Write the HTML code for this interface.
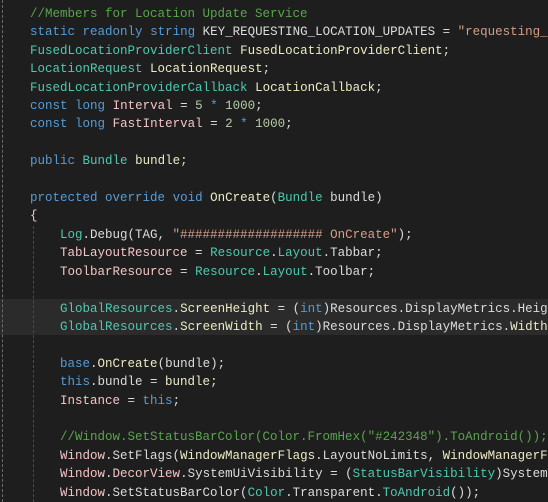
<!DOCTYPE html>
<html><head><meta charset="utf-8"><style>
html,body{margin:0;padding:0;background:#1e1e1e;width:548px;height:502px;overflow:hidden}
.c{position:absolute;left:30px;top:5px;width:518px;overflow:hidden;font-family:"Liberation Mono","Noto Sans CJK KR",monospace;font-size:12.5px;line-height:18.4px;color:#dcdcdc;white-space:pre}
.hl{position:absolute;left:0;top:299px;width:548px;height:36px;background:#2b2b2b}
.g1{position:absolute;left:2px;top:0;height:502px;border-left:1px dashed #6a6a6a}
.g2{position:absolute;left:33px;top:226px;height:276px;border-left:1px dashed #4a4a4a}
.k{color:#569cd6}.t{color:#4ec9b0}.m{color:#57a64a}.s{color:#d69d85}.n{color:#b5cea8}.y{color:#ecebc4}.p{color:#f4c4c4}
</style></head><body>
<div class="hl"></div><div class="g1"></div><div class="g2"></div>
<div class="c"><span class="m">//Members for Location Update Service</span>
<span class="k">static</span> <span class="k">readonly</span> <span class="k">string</span> KEY_REQUESTING_LOCATION_UPDATES = <span class="s">"requesting_location_updates"</span>;
<span class="t">FusedLocationProviderClient</span> <span class="y">FusedLocationProviderClient</span>;
<span class="t">LocationRequest</span> <span class="y">LocationRequest</span>;
<span class="t">FusedLocationProviderCallback</span> <span class="y">LocationCallback</span>;
<span class="k">const</span> <span class="k">long</span> <span class="p">Interval</span> = <span class="n">5</span> <span class="k">*</span> <span class="n">1000</span>;
<span class="k">const</span> <span class="k">long</span> <span class="p">FastInterval</span> = <span class="n">2</span> <span class="k">*</span> <span class="n">1000</span>;

<span class="k">public</span> <span class="t">Bundle</span> <span class="y">bundle</span>;

<span class="k">protected</span> <span class="k">override</span> <span class="k">void</span> <span class="y">OnCreate</span>(<span class="t">Bundle</span> bundle)
<span class="p">{</span>
    <span class="t">Log</span>.Debug(TAG, <span class="s">"################### OnCreate"</span>);
    <span class="p">TabLayoutResource</span> = <span class="t">Resource</span>.<span class="t">Layout</span>.Tabbar;
    <span class="p">ToolbarResource</span> = <span class="t">Resource</span>.<span class="t">Layout</span>.Toolbar;

    <span class="t">GlobalResources</span>.<span class="y">ScreenHeight</span> = (<span class="k">int</span>)Resources.DisplayMetrics.HeightPixels;
    <span class="t">GlobalResources</span>.<span class="y">ScreenWidth</span> = (<span class="k">int</span>)Resources.DisplayMetrics.<span class="y">WidthPixels</span>;

    <span class="k">base</span>.<span class="y">OnCreate</span>(bundle);
    <span class="k">this</span>.bundle = <span class="y">bundle</span>;
    <span class="p">Instance</span> = <span class="k">this</span>;

    <span class="m">//Window.SetStatusBarColor(Color.FromHex("#242348").ToAndroid());</span>
    <span class="p">Window</span>.SetFlags(<span class="y">WindowManagerFlags</span>.LayoutNoLimits, <span class="y">WindowManagerFlags</span>.LayoutNoLimits);
    <span class="p">Window</span>.<span class="p">DecorView</span>.SystemUiVisibility = (<span class="t">StatusBarVisibility</span>)SystemUiFlags;
    <span class="p">Window</span>.SetStatusBarColor(<span class="t">Color</span>.Transparent.<span class="t">ToAndroid</span>());</div>
</body></html>
